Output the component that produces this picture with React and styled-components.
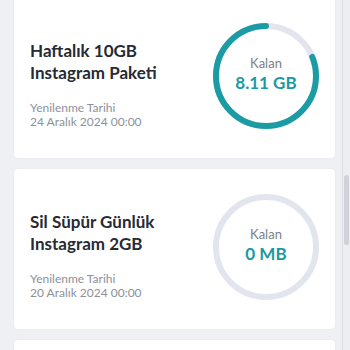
import React from "react";
import styled, { createGlobalStyle } from "styled-components";

const GlobalStyle = createGlobalStyle`
  html, body {
    margin: 0;
    padding: 0;
    background: #eff0f4;
    font-family: "Lato", "Noto Sans", sans-serif;
  }
`;

const Page = styled.div`
  display: flex;
  height: 350px;
  width: 350px;
  overflow: hidden;
  background: #eff0f4;
`;

const List = styled.div`
  flex: 1;
  display: flex;
  flex-direction: column;
  gap: 11px;
  padding: 0 7px 0 14px;
  margin-top: -2px;
`;

const Rail = styled.div`
  width: 7px;
  flex-shrink: 0;
  background: #eceef2;
  border-left: 1px solid #dcdee4;
  display: flex;
  flex-direction: column;
  padding-top: ${(p) => p.$offset}px;
`;

const Thumb = styled.div`
  height: ${(p) => p.$size}px;
  margin: 0 1px;
  border-radius: 3px;
  background: #cfd2d9;
`;

const Card = styled.div`
  height: 160px;
  flex-shrink: 0;
  box-sizing: border-box;
  background: #ffffff;
  border-radius: 4px;
  box-shadow: 0 0 2px rgba(30, 40, 70, 0.06);
  display: flex;
  align-items: flex-start;
  justify-content: space-between;
  padding: 25px 16px 0 16px;
`;

const Info = styled.div`
  display: flex;
  flex-direction: column;
  padding-top: 17px;
`;

const Title = styled.div`
  font-size: 17px;
  line-height: 22px;
  font-weight: 700;
  color: #262a34;
  width: 160px;
`;

const Renewal = styled.div`
  margin-top: 17px;
  font-size: 12px;
  line-height: 14px;
  color: #8d919a;
`;

const Gauge = styled.div`
  position: relative;
  width: 106px;
  height: 106px;
  display: grid;
  place-items: center;

  svg {
    position: absolute;
    inset: 0;
  }
`;

const GaugeText = styled.div`
  display: flex;
  flex-direction: column;
  align-items: center;
  position: relative;
  padding-bottom: 4px;
`;

const Label = styled.span`
  font-size: 13px;
  line-height: 16px;
  color: #7b7f88;
`;

const Amount = styled.span`
  font-size: 17px;
  line-height: 22px;
  font-weight: 700;
  color: #1b99a2;
  margin-top: 1px;
`;

const packages = [
  { name: "Haftalık 10GB Instagram Paketi", date: "24 Aralık 2024 00:00", left: 8.11, total: 10, unit: "GB" },
  { name: "Sil Süpür Günlük Instagram 2GB", date: "20 Aralık 2024 00:00", left: 0, total: 2, unit: "MB" },
];

function Ring({ left, total, unit }) {
  const r = 50;
  const c = 2 * Math.PI * r;
  const ratio = total ? left / total : 0;
  return (
    <Gauge>
      <svg width="106" height="106" viewBox="0 0 106 106">
        <circle cx="53" cy="53" r={r} fill="none" stroke="#e3e5ee" strokeWidth="6" />
        {ratio > 0 && (
          <circle
            cx="53"
            cy="53"
            r={r}
            fill="none"
            stroke="#1b9ca4"
            strokeWidth="6"
            strokeLinecap="round"
            strokeDasharray={`${c * ratio} ${c}`}
            transform="translate(106 0) scale(-1 1) rotate(-90 53 53)"
          />
        )}
      </svg>
      <GaugeText>
        <Label>Kalan</Label>
        <Amount>{`${left} ${unit}`}</Amount>
      </GaugeText>
    </Gauge>
  );
}

export default function App() {
  return (
    <>
      <GlobalStyle />
      <Page>
        <List>
          {packages.map((p, i) => (
            <Card key={i}>
              <Info>
                <Title>{p.name}</Title>
                <Renewal>
                  Yenilenme Tarihi
                  <br />
                  {p.date}
                </Renewal>
              </Info>
              <Ring left={p.left} total={p.total} unit={p.unit} />
            </Card>
          ))}
          <Card />
        </List>
        <Rail $offset={175}>
          <Thumb $size={70} />
        </Rail>
      </Page>
    </>
  );
}
